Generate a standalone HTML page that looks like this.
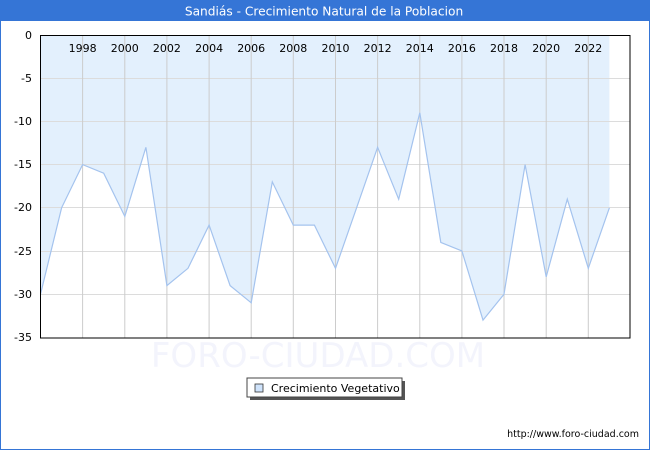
<!DOCTYPE html>
<html><head><meta charset="utf-8"><style>
html,body{margin:0;padding:0;background:#fff;}
svg{display:block;font-family:"DejaVu Sans","Liberation Sans",sans-serif;}
</style></head><body>
<svg width="650" height="450" viewBox="0 0 650 450" xmlns="http://www.w3.org/2000/svg">
<rect x="0.5" y="0.5" width="649" height="449" fill="#fff" stroke="#3575d6"/>
<rect x="0" y="0" width="650" height="21" fill="#3575d6"/>
<text x="324" y="15.5" fill="#fff" font-size="12.2" text-anchor="middle">Sandiás - Crecimiento Natural de la Poblacion</text>
<polygon fill="#e3f0fd" points="40.5,35 40.5,294.2 61.6,207.8 82.6,164.6 103.7,173.2 124.8,216.4 145.9,147.3 166.9,285.6 188,268.3 209.1,225.1 230.1,285.6 251.2,302.8 272.3,181.9 293.3,225.1 314.4,225.1 335.5,268.3 356.6,207.8 377.6,147.3 398.7,199.2 419.8,112.8 440.8,242.4 461.9,251 483,320.1 504,294.2 525.1,164.6 546.2,276.9 567.3,199.2 588.3,268.3 609.4,207.8 609.4,35"/>
<g stroke="#dcdcdc" stroke-width="1">
<line x1="40" y1="78.5" x2="630" y2="78.5"/><line x1="40" y1="121.5" x2="630" y2="121.5"/><line x1="40" y1="164.5" x2="630" y2="164.5"/><line x1="40" y1="207.5" x2="630" y2="207.5"/><line x1="40" y1="251.5" x2="630" y2="251.5"/><line x1="40" y1="294.5" x2="630" y2="294.5"/>
</g>
<g stroke="#cccccc" stroke-width="1">
<line x1="82.6" y1="35" x2="82.6" y2="338"/><line x1="124.8" y1="35" x2="124.8" y2="338"/><line x1="166.9" y1="35" x2="166.9" y2="338"/><line x1="209.1" y1="35" x2="209.1" y2="338"/><line x1="251.2" y1="35" x2="251.2" y2="338"/><line x1="293.3" y1="35" x2="293.3" y2="338"/><line x1="335.5" y1="35" x2="335.5" y2="338"/><line x1="377.6" y1="35" x2="377.6" y2="338"/><line x1="419.8" y1="35" x2="419.8" y2="338"/><line x1="461.9" y1="35" x2="461.9" y2="338"/><line x1="504" y1="35" x2="504" y2="338"/><line x1="546.2" y1="35" x2="546.2" y2="338"/><line x1="588.3" y1="35" x2="588.3" y2="338"/>
</g>
<polyline fill="none" stroke="#a4c3ee" stroke-width="1.2" points="40.5,294.2 61.6,207.8 82.6,164.6 103.7,173.2 124.8,216.4 145.9,147.3 166.9,285.6 188,268.3 209.1,225.1 230.1,285.6 251.2,302.8 272.3,181.9 293.3,225.1 314.4,225.1 335.5,268.3 356.6,207.8 377.6,147.3 398.7,199.2 419.8,112.8 440.8,242.4 461.9,251 483,320.1 504,294.2 525.1,164.6 546.2,276.9 567.3,199.2 588.3,268.3 609.4,207.8"/>
<rect x="40.5" y="35.5" width="589.5" height="302.5" fill="none" stroke="#000" stroke-width="1"/>
<g font-size="11" fill="#000" text-anchor="middle">
<text x="82.6" y="52">1998</text><text x="124.8" y="52">2000</text><text x="166.9" y="52">2002</text><text x="209.1" y="52">2004</text><text x="251.2" y="52">2006</text><text x="293.3" y="52">2008</text><text x="335.5" y="52">2010</text><text x="377.6" y="52">2012</text><text x="419.8" y="52">2014</text><text x="461.9" y="52">2016</text><text x="504" y="52">2018</text><text x="546.2" y="52">2020</text><text x="588.3" y="52">2022</text>
</g>
<g font-size="11" fill="#000" text-anchor="end">
<text x="32" y="39">0</text><text x="32" y="82">-5</text><text x="32" y="125">-10</text><text x="32" y="168">-15</text><text x="32" y="211">-20</text><text x="32" y="255">-25</text><text x="32" y="298">-30</text><text x="32" y="341">-35</text>
</g>
<text x="318" y="367" font-size="34" fill="#f3f4fc" text-anchor="middle">FORO-CIUDAD.COM</text>
<rect x="250" y="381" width="155" height="19" fill="#555"/>
<rect x="247" y="378" width="155" height="19" fill="#fff" stroke="#444"/>
<rect x="255" y="384" width="8" height="8" fill="#cfe3fb" stroke="#333" stroke-width="0.8"/>
<text x="271" y="392" font-size="11" fill="#000">Crecimiento Vegetativo</text>
<text x="639" y="437" font-size="9.5" fill="#000" text-anchor="end">http://www.foro-ciudad.com</text>
</svg>
</body></html>
